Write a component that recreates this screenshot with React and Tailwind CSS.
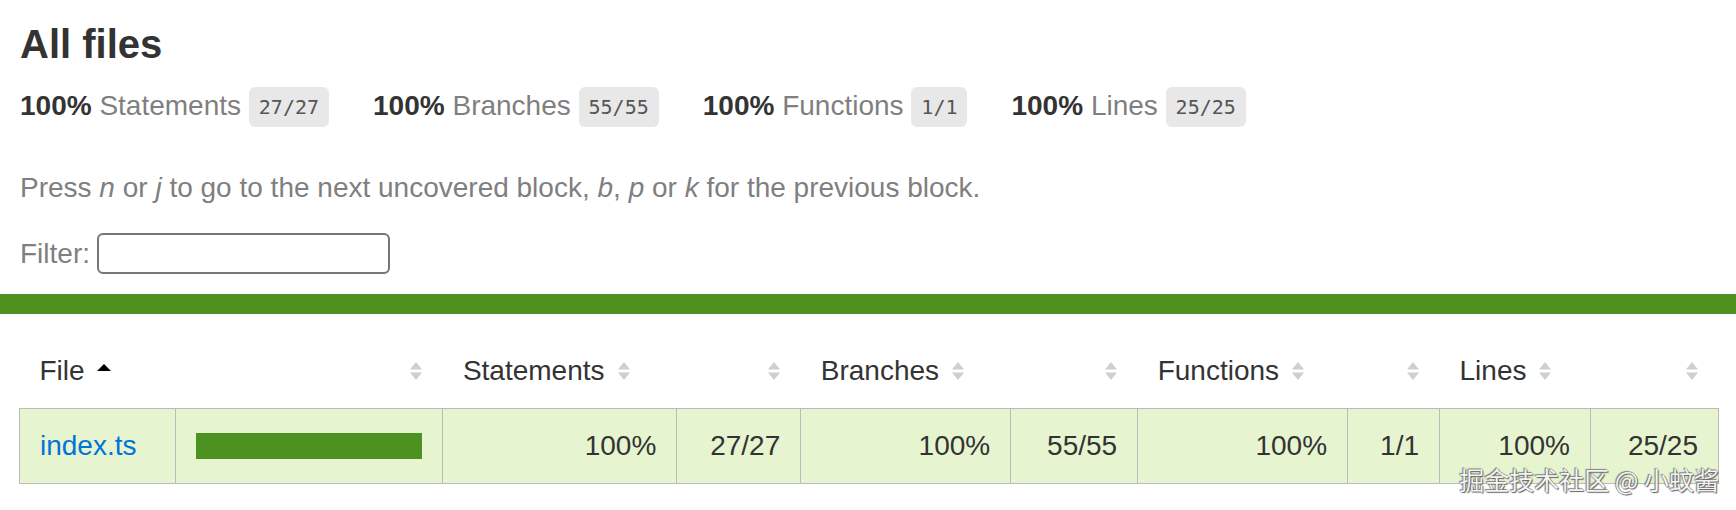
import React from "react";

function Sorter({ active }) {
  return (
    <span className="inline-block align-middle ml-[12px] w-[14px] h-[20px] relative -top-[2px]">
      <svg width="14" height="20" viewBox="0 0 14 20">
        {active ? (
          <path d="M0 10 L7 3 L14 10 Z" fill="#000" />
        ) : (
          <>
            <path d="M1 8.5 L7 1 L13 8.5 Z" fill="#cfcfcf" />
            <path d="M1 11.5 L7 19 L13 11.5 Z" fill="#cfcfcf" />
          </>
        )}
      </svg>
    </span>
  );
}

function Stat({ label, frac }) {
  return (
    <div className="py-[20px] pr-[44px] whitespace-nowrap">
      <span className="font-bold">100% </span>
      <span className="text-[#7f7f7f]">{label} </span>
      <span className="align-middle bg-[#e8e8e8] text-[#555] rounded-[6px] px-[10px] py-[8px] text-[20px] [font-family:'DejaVu_Sans_Mono',monospace]">
        {frac}
      </span>
    </div>
  );
}

export default function App() {
  const th = "p-[20px] text-left font-normal whitespace-nowrap";
  const td = "p-[20px] border-r border-[#bbb] whitespace-nowrap";
  return (
    <div className="relative min-h-[510px] bg-white text-[#333] text-[28px] leading-[1.22] [font-family:'Liberation_Sans',Arial,sans-serif]">
      <div className="p-[20px]">
        <h1 className="text-[40px] font-bold m-0 leading-[1.22]">All files</h1>
        <div className="flex">
          <Stat label="Statements" frac="27/27" />
          <Stat label="Branches" frac="55/55" />
          <Stat label="Functions" frac="1/1" />
          <Stat label="Lines" frac="25/25" />
        </div>
        <p className="my-[28px] text-[#7f7f7f]">
          Press <em>n</em> or <em>j</em> to go to the next uncovered block, <em>b</em>, <em>p</em> or{" "}
          <em>k</em> for the previous block.
        </p>
        <div className="text-[#7f7f7f] flex items-center">
          <span>Filter:</span>
          <input
            type="search"
            className="ml-[7px] w-[293px] h-[41px] border-2 border-[#767676] rounded-[6px] bg-white outline-none"
          />
        </div>
      </div>
      <div className="h-[20px] bg-[#4d9221]"></div>
      <div className="pt-[20px] pb-[20px] pl-[19px] pr-[17px]">
        <table className="w-full border-collapse">
          <thead>
            <tr>
              <th className={`${th} w-[156px]`}>
                File
                <Sorter active />
              </th>
              <th className={`${th} text-right w-[268px]`}>
                <Sorter />
              </th>
              <th className={`${th} w-[234px]`}>
                Statements
                <Sorter />
              </th>
              <th className={`${th} text-right w-[124px]`}>
                <Sorter />
              </th>
              <th className={`${th} w-[210px]`}>
                Branches
                <Sorter />
              </th>
              <th className={`${th} text-right w-[127px]`}>
                <Sorter />
              </th>
              <th className={`${th} w-[210px]`}>
                Functions
                <Sorter />
              </th>
              <th className={`${th} text-right w-[92px]`}>
                <Sorter />
              </th>
              <th className={`${th} w-[151px]`}>
                Lines
                <Sorter />
              </th>
              <th className={`${th} text-right w-[128px]`}>
                <Sorter />
              </th>
            </tr>
          </thead>
          <tbody className="border border-[#bbb]">
            <tr className="bg-[#e6f5d0] border-b border-[#bbb]">
              <td className={td}>
                <a className="text-[#0074d9]" href="#">
                  index.ts
                </a>
              </td>
              <td className={td}>
                <div className="leading-[0] border border-[#4d9221]">
                  <div className="inline-block h-[24px] w-full bg-[#4d9221]"></div>
                </div>
              </td>
              <td className={`${td} text-right`}>100%</td>
              <td className={`${td} text-right`}>27/27</td>
              <td className={`${td} text-right`}>100%</td>
              <td className={`${td} text-right`}>55/55</td>
              <td className={`${td} text-right`}>100%</td>
              <td className={`${td} text-right`}>1/1</td>
              <td className={`${td} text-right`}>100%</td>
              <td className="p-[20px] text-right whitespace-nowrap">25/25</td>
            </tr>
          </tbody>
        </table>
      </div>
      <div className="absolute right-[17px] top-[464px] text-[25px] text-[#f4f4f4] [font-family:'Noto_Sans_CJK_SC',sans-serif] [text-shadow:0_0_1px_#555,1px_1px_1px_#666,-1px_-1px_1px_#888] whitespace-nowrap">
        掘金技术社区 @ 小蚊酱
      </div>
    </div>
  );
}
